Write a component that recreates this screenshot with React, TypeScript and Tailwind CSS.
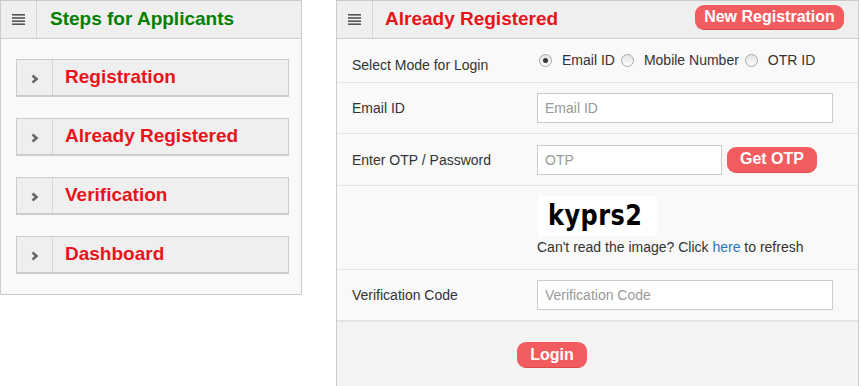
const steps = ["Registration", "Already Registered", "Verification", "Dashboard"];

const font = { fontFamily: '"Liberation Sans", Arial, sans-serif' };

const Hamburger = () => (
    <svg width="13" height="11" viewBox="0 0 13 11" className="text-[#555]">
        <rect x="0" y="0" width="13" height="1.6" fill="currentColor" />
        <rect x="0" y="3.2" width="13" height="1.6" fill="currentColor" />
        <rect x="0" y="6.4" width="13" height="1.6" fill="currentColor" />
        <rect x="0" y="9.4" width="13" height="1.6" fill="currentColor" />
    </svg>
);

const Chevron = () => (
    <svg width="8" height="10" viewBox="0 0 8 10" className="text-[#666]">
        <polyline points="1.5,1.5 5.5,5 1.5,8.5" fill="none" stroke="currentColor" strokeWidth="2.6" />
    </svg>
);

const Radio = ({ checked }: { checked?: boolean }) => (
    <span className="w-[13px] h-[13px] rounded-full border border-[#a9a9a9] bg-gradient-to-b from-[#e4e4e4] to-[#fbfbfb] flex items-center justify-center shrink-0">
        {checked && <span className="w-[5px] h-[5px] rounded-full bg-[#333]" />}
    </span>
);

const Input = ({ placeholder, width }: { placeholder: string; width: string }) => (
    <input
        placeholder={placeholder}
        className={`${width} h-[30px] border border-[#ccc] bg-white pl-[7px] text-[14px] text-[#333] placeholder:text-[#999] outline-none`}
        style={font}
    />
);

const RedButton = ({ children, className }: { children: React.ReactNode; className: string }) => (
    <button className={`bg-[#f25c5e] text-white font-bold text-[16px] rounded-[9px] border-b border-[#d94a4c] leading-none ${className}`}>
        {children}
    </button>
);

export default function App() {
    return (
        <div className="w-[862px] h-[386px] bg-white flex items-start overflow-hidden text-[#333]" style={font}>
            {/* Steps panel */}
            <div className="w-[302px] border border-[#ccc] bg-[#f9f9f9]">
                <div className="h-[38px] flex bg-[#efefef] border-b border-[#ccc]">
                    <div className="w-[36px] border-r border-[#d6d6d6] flex items-center justify-center">
                        <Hamburger />
                    </div>
                    <h2 className="pl-[13px] flex items-center text-[19px] font-bold text-[#008000]">Steps for Applicants</h2>
                </div>
                <div className="pl-[15px] pr-[12px] pt-[20px] pb-[20px] flex flex-col gap-[21px]">
                    {steps.map((s) => (
                        <div key={s} className="h-[38px] flex bg-[#efefef] border border-[#ccc] border-b-2">
                            <div className="w-[36px] border-r border-[#d6d6d6] flex items-center justify-center pt-[2px]">
                                <Chevron />
                            </div>
                            <span className="pl-[12px] flex items-center text-[19px] font-bold text-[#e8141c]">{s}</span>
                        </div>
                    ))}
                </div>
            </div>

            {/* Login panel */}
            <div className="ml-[34px] w-[523px] h-[400px] border border-[#ccc] bg-[#f3f3f3] flex flex-col">
                <div className="h-[38px] flex bg-[#efefef] border-b border-[#ccc] shrink-0">
                    <div className="w-[36px] border-r border-[#d6d6d6] flex items-center justify-center">
                        <Hamburger />
                    </div>
                    <h2 className="pl-[12px] flex items-center text-[19px] font-bold text-[#e8141c]">Already Registered</h2>
                    <RedButton className="ml-auto mr-[14px] mt-[4px] h-[25px] w-[149px]">New Registration</RedButton>
                </div>

                <div className="bg-[#f9f9f9] border-b-2 border-[#e3e3e3]">
                    <div className="h-[44px] flex border-b border-[#e6e6e6] text-[14px]">
                        <div className="w-[200px] pl-[15px] pt-[16px]">Select Mode for Login</div>
                        <div className="flex items-center pt-[3px] h-[40px]">
                            <span className="ml-[2px]"><Radio checked /></span>
                            <span className="ml-[10px]">Email ID</span>
                            <span className="ml-[6px]"><Radio /></span>
                            <span className="ml-[10px]">Mobile Number</span>
                            <span className="ml-[6px]"><Radio /></span>
                            <span className="ml-[10px]">OTR ID</span>
                        </div>
                    </div>
                    <div className="h-[51px] flex items-center border-b border-[#e6e6e6] text-[14px]">
                        <div className="w-[200px] pl-[15px] pt-[1px]">Email ID</div>
                        <Input placeholder="Email ID" width="w-[296px]" />
                    </div>
                    <div className="h-[52px] flex items-center border-b border-[#e6e6e6] text-[14px]">
                        <div className="w-[200px] pl-[15px] pt-[1px]">Enter OTP / Password</div>
                        <Input placeholder="OTP" width="w-[185px]" />
                        <RedButton className="ml-[5px] h-[26px] w-[90px]">Get OTP</RedButton>
                    </div>
                    <div className="h-[84px] flex border-b border-[#e6e6e6]">
                        <div className="w-[200px]" />
                        <div className="pt-[10px]">
                            <div
                                className="w-[119px] h-[40px] bg-white ml-[1px] flex items-center pl-[10px] text-[29px] font-bold text-black tracking-[0.5px]"
                                style={{ fontFamily: '"DejaVu Sans Condensed", "DejaVu Sans", sans-serif' }}
                            >
                                <span className="scale-x-[0.92] origin-left inline-block">kyprs2</span>
                            </div>
                            <p className="text-[14px] leading-[18px] pt-[2px] text-[#333]">
                                Can't read the image? Click <a className="text-[#1a7bc4]">here</a> to refresh
                            </p>
                        </div>
                    </div>
                    <div className="h-[50px] flex items-center text-[14px]">
                        <div className="w-[200px] pl-[15px]">Verification Code</div>
                        <Input placeholder="Verification Code" width="w-[296px]" />
                    </div>
                </div>

                <div className="pl-[180px] pt-[20px]">
                    <RedButton className="h-[26px] w-[70px]">Login</RedButton>
                </div>
            </div>
        </div>
    );
}
